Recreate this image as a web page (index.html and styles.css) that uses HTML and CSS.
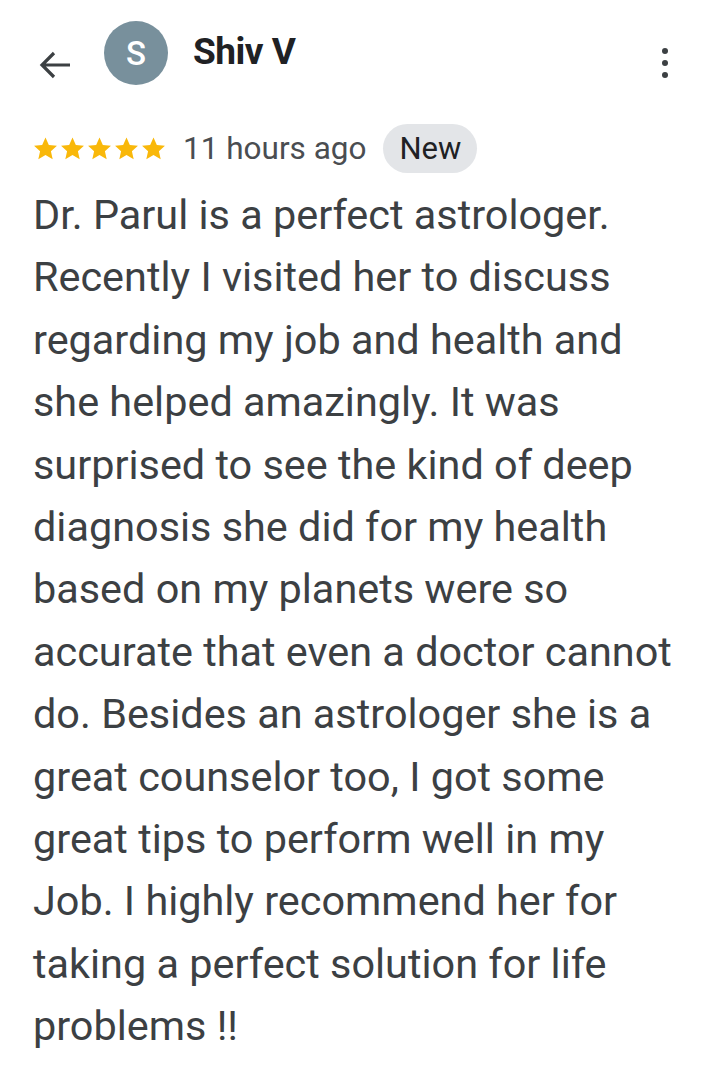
FILE: index.html
```html
<!DOCTYPE html>
<html>
<head>
<meta charset="utf-8">
<link rel="stylesheet" href="styles.css">
</head>
<body>
<div class="page">
  <header class="top">
    <svg class="back" width="34" height="30" viewBox="0 0 34 30"><path d="M32 15H4M16 3L4 15l12 12" fill="none" stroke="#3c4043" stroke-width="3.2"/></svg>
    <div class="avatar">S</div>
    <div class="name">Shiv V</div>
    <div class="more"><span></span><span></span><span></span></div>
  </header>
  <div class="meta">
    <div class="stars">
      <svg viewBox="0 0 24 24"><path d="M12 1.5l3.2 7.1 7.8.8-5.8 5.2 1.7 7.6L12 18.3l-6.9 3.9 1.7-7.6L1 9.4l7.8-.8z"/></svg>
      <svg viewBox="0 0 24 24"><path d="M12 1.5l3.2 7.1 7.8.8-5.8 5.2 1.7 7.6L12 18.3l-6.9 3.9 1.7-7.6L1 9.4l7.8-.8z"/></svg>
      <svg viewBox="0 0 24 24"><path d="M12 1.5l3.2 7.1 7.8.8-5.8 5.2 1.7 7.6L12 18.3l-6.9 3.9 1.7-7.6L1 9.4l7.8-.8z"/></svg>
      <svg viewBox="0 0 24 24"><path d="M12 1.5l3.2 7.1 7.8.8-5.8 5.2 1.7 7.6L12 18.3l-6.9 3.9 1.7-7.6L1 9.4l7.8-.8z"/></svg>
      <svg viewBox="0 0 24 24"><path d="M12 1.5l3.2 7.1 7.8.8-5.8 5.2 1.7 7.6L12 18.3l-6.9 3.9 1.7-7.6L1 9.4l7.8-.8z"/></svg>
    </div>
    <span class="time">11 hours ago</span>
    <span class="chip">New</span>
  </div>
  <p class="review">Dr. Parul is a perfect astrologer.<br>Recently I visited her to discuss<br>regarding my job and health and<br>she helped amazingly. It was<br>surprised to see the kind of deep<br>diagnosis she did for my health<br>based on my planets were so<br>accurate that even a doctor cannot<br>do. Besides an astrologer she is a<br>great counselor too, I got some<br>great tips to perform well in my<br>Job. I highly recommend her for<br>taking a perfect solution for life<br>problems !!</p>
</div>
</body>
</html>
```
FILE: styles.css
```css
* { box-sizing: border-box; }
html, body { margin: 0; padding: 0; background: #fff; }
body { font-family: Roboto, "Liberation Sans", sans-serif; color: #3c4043; width: 720px; height: 1081px; overflow: hidden; }
.page { padding: 0 0 0 33px; }
.top { display: flex; align-items: center; height: 106px; }
.back { margin-left: 5px; margin-top: 24px; flex: none; }
.avatar { width: 64px; height: 64px; border-radius: 50%; background: #78909c; color: #fff; font-size: 33px; font-weight: 500; display: flex; align-items: center; justify-content: center; margin-left: 32px; flex: none; }
.name { font-weight: 700; font-size: 37px; color: #202124; margin-left: 25px; flex: 1; margin-top: -4px; letter-spacing: -0.5px; }
.more { display: flex; flex-direction: column; gap: 6px; margin-right: 52px; margin-top: 20px; }
.more span { width: 6px; height: 6px; border-radius: 50%; background: #3c4043; display: block; }
.meta { display: flex; align-items: center; height: 50px; margin-top: 17px; }
.stars { display: flex; gap: 2px; }
.stars svg { width: 25px; height: 25px; fill: #f9b80a; display: block; }
.time { font-size: 31.5px; color: #4a4d51; margin-left: 17px; }
.chip { margin-left: 17px; background: #e3e5e8; color: #202124; font-size: 31px; height: 49px; padding: 0 16px; border-radius: 25px; display: flex; align-items: center; }
.review { margin: 11px 0 0; font-size: 41.4px; line-height: 62.4px; color: #3c4043; }
```
